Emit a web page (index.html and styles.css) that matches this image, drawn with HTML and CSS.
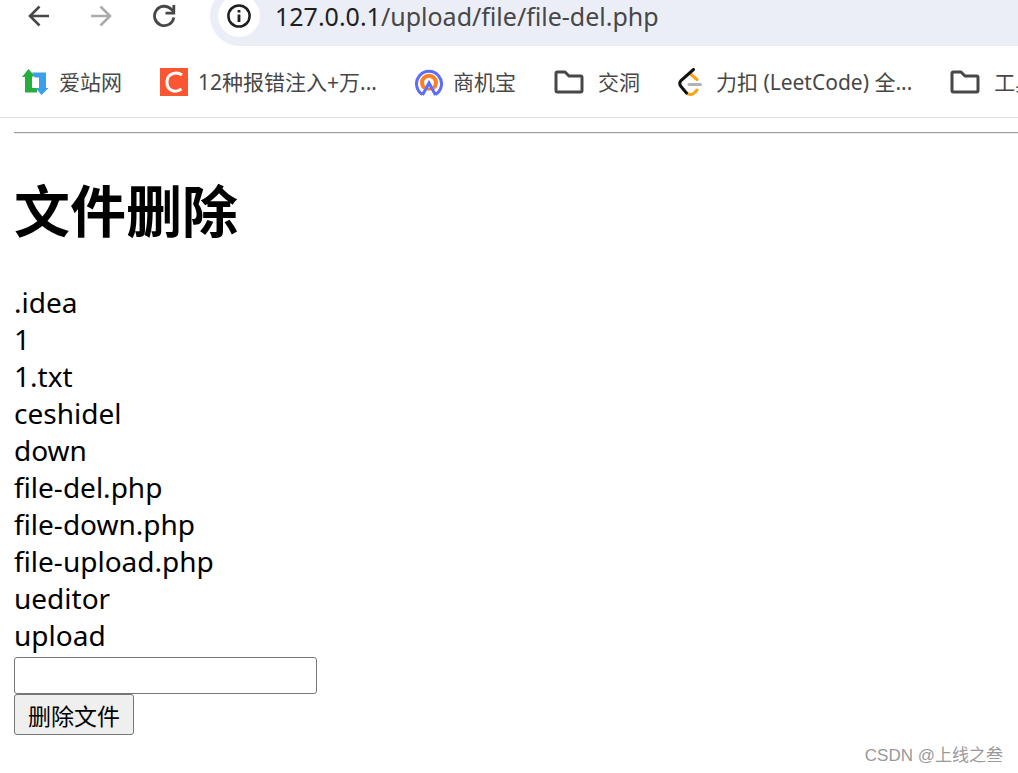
FILE: index.html
```html
<!DOCTYPE html>
<html lang="zh-CN">
<head>
  <meta charset="UTF-8">
  <title>文件删除</title>
  <link rel="stylesheet" href="styles.css">
</head>
<body>

  <header class="browser">
    <div class="toolbar">
      <nav class="nav-buttons">
        <button type="button" aria-label="后退">
          <svg width="22" height="22" viewBox="0 0 22 22" fill="none" stroke="#474747" stroke-width="2.6"><path d="M21 11H2M11.500 1.500L2 11l9.500 9.500"/></svg>
        </button>
        <button type="button" aria-label="前进" disabled>
          <svg width="22" height="22" viewBox="0 0 22 22" fill="none" stroke="#ababab" stroke-width="2.6"><path d="M1 11h19M10.500 1.500L20 11l-9.500 9.500"/></svg>
        </button>
        <button type="button" aria-label="刷新">
          <svg width="24" height="24" viewBox="0 0 24 24" fill="none" stroke="#474747" stroke-width="2.8"><path d="M21.800 13.500A9.700 9.700 0 1 1 19.300 5.300L22 8"/><path d="M21.800 1v8.200H13.500"/></svg>
        </button>
      </nav>
      <div class="address">
        <span class="site-info">
          <svg width="24" height="24" viewBox="0 0 24 24" fill="none" stroke="#1f1f1f"><circle cx="12" cy="12" r="10.600" stroke-width="2.5"/><path d="M12 10.500v7.500M12 6v2.600" stroke-width="2.8"/></svg>
        </span>
        <span class="url">127.0.0.1<span class="path">/upload/file/file-del.php</span></span>
      </div>
    </div>

    <nav class="bookmarks">
      <a href="#">
        <svg width="28" height="28" viewBox="0 0 28 28"><path fill="#25ae3e" d="M7.500 1L14 8.500h-3V20h5v4.500H4V9H1z"/><path fill="#3b9fe9" d="M11 4.500h14V20h2.500L20.500 27l-6-7h3.500V9.500h-4z"/></svg>
        爱站网
      </a>
      <a href="#">
        <svg width="28" height="28" viewBox="0 0 28 28"><path fill="#fc5531" d="M0 0h28v28H0z"/><path d="M22 7C17 3.500 7.500 4.500 7 13.500S15 25.500 21.500 21" fill="none" stroke="#fff" stroke-width="3"/></svg>
        12种报错注入+万...
      </a>
      <a href="#">
        <svg width="28" height="28" viewBox="0 0 28 28" fill="none"><path stroke="#ff8021" stroke-width="4" d="M9.500 20A7 7 0 1 1 18.500 20"/><path stroke="#ff8021" stroke-width="3" d="M11.500 21h5"/><path stroke="#5b6cff" stroke-width="3" d="M7.500 26.500A12.500 12.500 0 1 1 20.500 26.500M7.500 27L14 15l6.500 12"/></svg>
        商机宝
      </a>
      <a href="#" class="folder">
        <svg width="30" height="24" viewBox="0 0 30 24" fill="none" stroke="#474747" stroke-width="3" stroke-linejoin="round"><path d="M2 3.500Q2 2 3.500 2H11l4 4h11.500Q28 6 28 7.500v13q0 1.500-1.500 1.500h-23Q2 22 2 20.500z"/></svg>
        交洞
      </a>
      <a href="#">
        <svg width="28" height="28" viewBox="0 0 28 28" fill="none" stroke-linecap="round" stroke-width="3"><path stroke="#ffa116" d="M12.500 6l6.500 5.500M8.500 25c4 3 7 1.500 10.500-3"/><path stroke="#b3b3b3" d="M11 16.500h11.500"/><path stroke="#111" d="M15.500 1.500L3 12.500q-2.500 3 0 6L8.500 25"/></svg>
        力扣 (LeetCode) 全...
      </a>
      <a href="#" class="folder">
        <svg width="30" height="24" viewBox="0 0 30 24" fill="none" stroke="#474747" stroke-width="3" stroke-linejoin="round"><path d="M2 3.500Q2 2 3.500 2H11l4 4h11.500Q28 6 28 7.500v13q0 1.500-1.500 1.500h-23Q2 22 2 20.500z"/></svg>
        工具
      </a>
    </nav>
  </header>

  <main>
    <hr>
    <h1>文件删除</h1>
    <ul class="files">
      <li>.idea</li>
      <li>1</li>
      <li>1.txt</li>
      <li>ceshidel</li>
      <li>down</li>
      <li>file-del.php</li>
      <li>file-down.php</li>
      <li>file-upload.php</li>
      <li>ueditor</li>
      <li>upload</li>
    </ul>
    <form>
      <input type="text" name="file" aria-label="文件名">
      <button type="submit">删除文件</button>
    </form>
  </main>

  <div class="watermark">CSDN @上线之叁</div>

</body>
</html>
```
FILE: styles.css
```css
* {
  box-sizing: border-box;
}

body {
  margin: 0;
  background: #fff;
  color: #000;
  font-family: "Noto Sans", "Noto Sans CJK SC", sans-serif;
  overflow: hidden;
}

.toolbar {
  display: flex;
  align-items: flex-end;
  height: 46px;
  overflow: hidden;
}

.nav-buttons {
  display: flex;
  align-items: center;
  gap: 40px;
  height: 60px;
  padding-left: 28px;
  width: 210px;
  flex: none;
}

.nav-buttons button {
  display: flex;
  padding: 0;
  border: 0;
  background: none;
}

.address {
  display: flex;
  align-items: center;
  flex: 1;
  gap: 15px;
  height: 60px;
  padding-left: 8px;
  border-radius: 30px 0 0 30px;
  background: #ebeef7;
}

.site-info {
  display: flex;
  align-items: center;
  justify-content: center;
  width: 42px;
  height: 42px;
  border-radius: 50%;
  background: #fff;
}

.url {
  font-size: 25px;
  color: #1f1f1f;
}

.path {
  color: #474747;
}

.bookmarks {
  display: flex;
  align-items: center;
  gap: 38px;
  height: 72px;
  padding-left: 21px;
  border-bottom: 1px solid #dfdfdf;
  overflow: hidden;
}

.bookmarks a {
  display: flex;
  align-items: center;
  flex: none;
  gap: 10px;
  font-size: 21px;
  line-height: 28px;
  color: #474747;
  text-decoration: none;
  white-space: nowrap;
}

.bookmarks .folder {
  gap: 14px;
}

main {
  padding: 14px 0 0 14px;
}

hr {
  margin: 0;
  border: 0;
  border-top: 1px solid #9a9a9a;
  border-bottom: 1px solid #eee;
}

h1 {
  margin: 40px 0 38px;
  font-size: 56px;
  line-height: 72px;
}

.files {
  margin: 0;
  padding: 0;
  list-style: none;
  font-size: 28px;
  line-height: 37px;
}

form {
  display: flex;
  flex-direction: column;
  align-items: flex-start;
  margin-top: 3px;
}

form input {
  width: 303px;
  height: 37px;
  border: 1px solid #767676;
  border-radius: 3px;
  font-size: 23px;
}

form button {
  height: 41px;
  padding: 0 13px;
  border: 1px solid #767676;
  border-radius: 3px;
  background: #efefef;
  color: #000;
  font-family: inherit;
  font-size: 23px;
}

.watermark {
  position: absolute;
  right: 15px;
  bottom: 5px;
  font-size: 17px;
  line-height: 24px;
  color: #999;
  font-family: "Liberation Sans", "Noto Sans CJK SC", sans-serif;
}
```
